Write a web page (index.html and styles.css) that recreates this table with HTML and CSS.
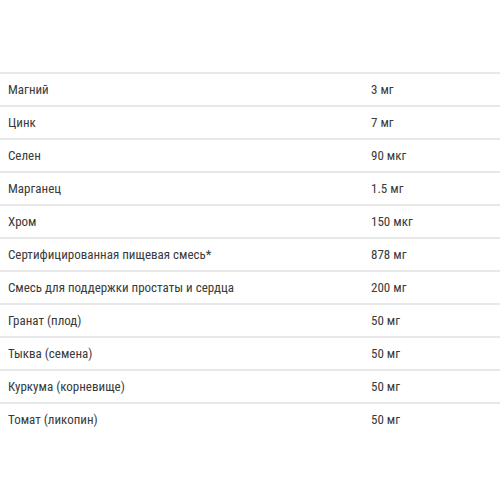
FILE: index.html
```html
<!DOCTYPE html>
<html lang="ru">
<head>
<meta charset="utf-8">
<link rel="stylesheet" href="styles.css">
</head>
<body>
<div class="table">
  <div class="row"><span class="name">Магний</span><span class="val">3 мг</span></div>
  <div class="row"><span class="name">Цинк</span><span class="val">7 мг</span></div>
  <div class="row"><span class="name">Селен</span><span class="val">90 мкг</span></div>
  <div class="row"><span class="name">Марганец</span><span class="val">1.5 мг</span></div>
  <div class="row"><span class="name">Хром</span><span class="val">150 мкг</span></div>
  <div class="row"><span class="name">Сертифицированная пищевая смесь*</span><span class="val">878 мг</span></div>
  <div class="row"><span class="name">Смесь для поддержки простаты и сердца</span><span class="val">200 мг</span></div>
  <div class="row"><span class="name">Гранат (плод)</span><span class="val">50 мг</span></div>
  <div class="row"><span class="name">Тыква (семена)</span><span class="val">50 мг</span></div>
  <div class="row"><span class="name">Куркума (корневище)</span><span class="val">50 мг</span></div>
  <div class="row"><span class="name">Томат (ликопин)</span><span class="val">50 мг</span></div>
</div>
</body>
</html>
```

FILE: styles.css
```css
html, body {
  margin: 0;
  padding: 0;
  background: #fff;
}
body {
  font-family: "Roboto", "DejaVu Sans Condensed", sans-serif;
  font-stretch: 77%;
  font-size: 13px;
  color: #3a3a3a;
}
.table {
  margin-top: 72px;
}
.row {
  display: grid;
  grid-template-columns: 363px 1fr;
  height: 31px;
  align-items: center;
  border-top: 2px solid #e8e8e8;
  padding-left: 8px;
}
```
